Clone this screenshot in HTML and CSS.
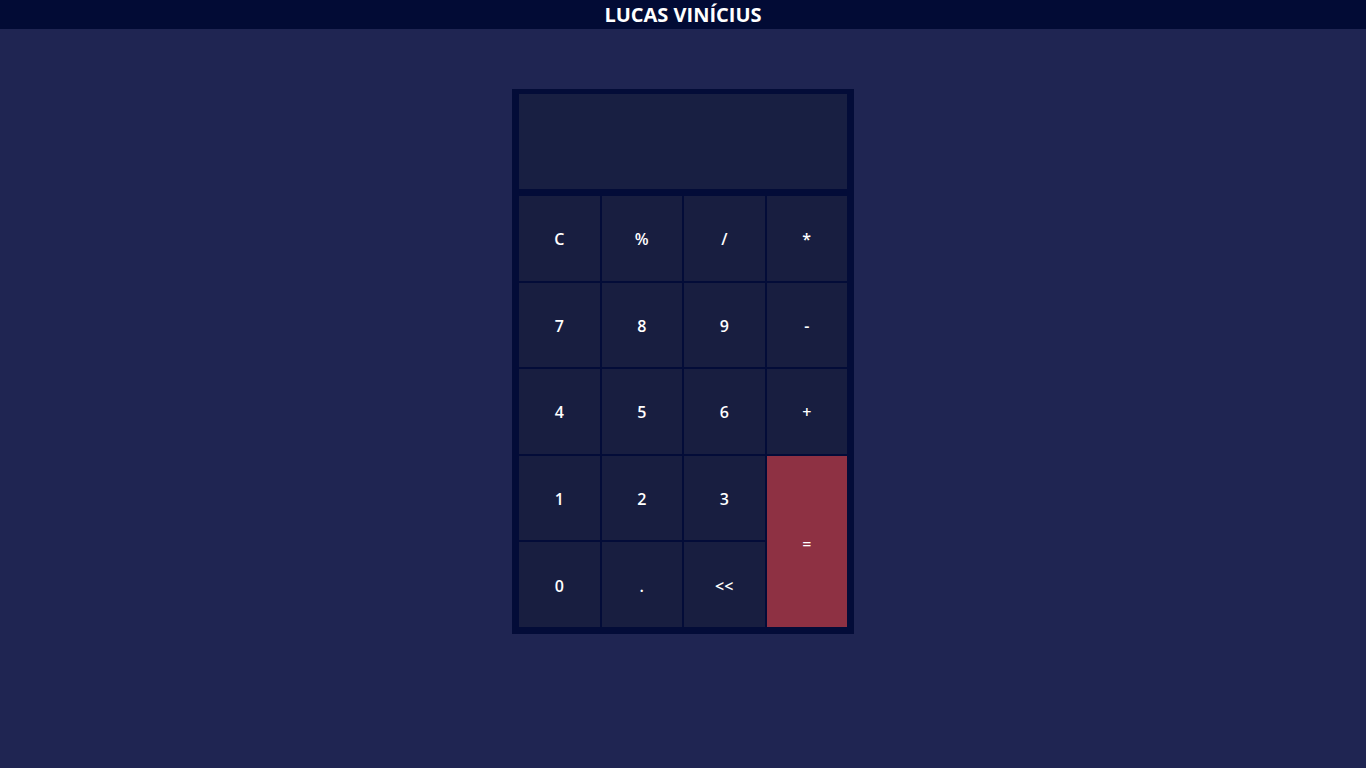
FILE: index.html
```html
<!DOCTYPE html>
<html lang="pt-BR">
<head>
<meta charset="utf-8">
<title>Calculadora</title>
<link rel="stylesheet" href="styles.css">
</head>
<body>
<header class="top">
  <h1 class="title">LUCAS VINÍCIUS</h1>
</header>
<main class="page">
  <div class="calc">
    <div class="display"></div>
    <div class="keys">
      <button class="key">C</button>
      <button class="key">%</button>
      <button class="key">/</button>
      <button class="key">*</button>
      <button class="key">7</button>
      <button class="key">8</button>
      <button class="key">9</button>
      <button class="key">-</button>
      <button class="key">4</button>
      <button class="key">5</button>
      <button class="key">6</button>
      <button class="key">+</button>
      <button class="key">1</button>
      <button class="key">2</button>
      <button class="key">3</button>
      <button class="key key-eq">=</button>
      <button class="key">0</button>
      <button class="key">.</button>
      <button class="key">&lt;&lt;</button>
    </div>
  </div>
</main>
</body>
</html>
```
FILE: styles.css
```css
* { box-sizing: border-box; }
html, body {
  margin: 0;
  padding: 0;
  background: #1f2552;
  font-family: "Open Sans", "Noto Sans", sans-serif;
  min-height: 100vh;
}
.top {
  height: 29px;
  background: #020b35;
  display: flex;
  align-items: center;
  justify-content: center;
}
.title {
  margin: 0;
  color: #fff;
  font-size: 20px;
  font-weight: 700;
  letter-spacing: 0;
  line-height: 31px;
}
.page {
  display: flex;
  justify-content: center;
  padding-top: 60px;
}
.calc {
  width: 342px;
  background: #030c38;
  padding: 4px 6px 6px 6px;
}
.display {
  height: 97px;
  background: #181f42;
  border: 1px solid #030c38;
}
.keys {
  margin-top: 5px;
  height: 433px;
  display: grid;
  grid-template-columns: repeat(4, 1fr);
  grid-template-rows: repeat(5, 1fr);
}
.key {
  background: #181e40;
  border: 1px solid #030c38;
  color: #fff;
  font-family: "Open Sans", "Noto Sans", sans-serif;
  font-size: 16px;
  font-weight: 600;
  padding: 2px 0 0 0;
  margin: 0;
}
.key-eq {
  grid-column: 4;
  grid-row: 4 / span 2;
  background: #8e3143;
  font-weight: 500;
  padding-top: 6px;
}
```
